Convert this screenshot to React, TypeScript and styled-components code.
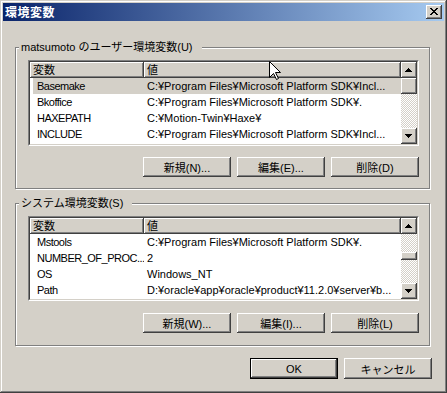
import React from "react";
import styled, { createGlobalStyle, css } from "styled-components";

const FACE = "#D4D0C8";
const SHADOW = "#808080";
const DARK = "#404040";
const HILITE = "#FFFFFF";

const Global = createGlobalStyle`
  html, body { margin: 0; padding: 0; background: ${FACE}; }
  body {
    font-family: "Liberation Sans", "Noto Sans CJK JP", sans-serif;
    font-size: 11px;
    color: #000;
  }
  * { box-sizing: border-box; }
`;

const raised = css`
  background: ${FACE};
  box-shadow: inset -1px -1px ${DARK}, inset 1px 1px ${HILITE},
    inset -2px -2px ${SHADOW}, inset 2px 2px ${FACE};
`;

const Window = styled.div`
  position: relative;
  width: 447px;
  height: 393px;
  padding: 3px;
  background: ${FACE};
  box-shadow: inset -1px -1px ${DARK}, inset 1px 1px ${FACE},
    inset -2px -2px ${SHADOW}, inset 2px 2px ${HILITE};
  display: flex;
  flex-direction: column;
`;

const TitleBar = styled.div`
  height: 18px;
  flex: none;
  display: flex;
  align-items: center;
  padding: 0 2px 0 2px;
  background: linear-gradient(to right, #0a246a, #a6caf0);
`;

const TitleText = styled.span`
  flex: 1;
  color: #fff;
  font-family: "Noto Sans CJK JP", sans-serif;
  font-weight: 700;
  font-size: 12px;
  line-height: 18px;
  letter-spacing: 0.5px;
`;

const CloseButton = styled.div`
  width: 16px;
  height: 14px;
  padding: 3px 0 0 4px;
  ${raised};
  svg { display: block; }
`;

const Body = styled.div`
  flex: 1;
  display: flex;
  flex-direction: column;
  padding: 26px 12px 11px 12px;
`;

const Group = styled.div<{ $pb: number; $mt: number }>`
  position: relative;
  margin: ${(p) => p.$mt}px 2px 0 0;
  border: 1px solid ${SHADOW};
  box-shadow: 1px 1px 0 ${HILITE}, inset 1px 1px 0 ${HILITE};
  padding: 12px 10px ${(p) => p.$pb}px 12px;
  display: flex;
  flex-direction: column;
`;

const GroupLabel = styled.span`
  position: absolute;
  left: 3px;
  top: -8px;
  height: 14px;
  line-height: 14px;
  padding: 0 9px 0 2px;
  background: ${FACE};
  white-space: nowrap;
`;

const ListFrame = styled.div<{ $h: number }>`
  height: ${(p) => p.$h}px;
  border: 1px solid;
  border-color: ${SHADOW} ${HILITE} ${HILITE} ${SHADOW};
`;

const ListInner = styled.div`
  height: 100%;
  border: 1px solid;
  border-color: ${DARK} ${FACE} ${FACE} ${DARK};
  background: #fff;
  display: grid;
  grid-template-columns: 1fr 16px;
  overflow: hidden;
`;

const ListArea = styled.div`
  overflow: hidden;
  display: flex;
  flex-direction: column;
`;

const Header = styled.div`
  display: grid;
  grid-template-columns: 114px 1fr;
  height: 16px;
  flex: none;
`;

const HeaderCell = styled.div`
  ${raised};
  padding-left: 3px;
  line-height: 16px;
  white-space: nowrap;
  overflow: hidden;
`;

const Row = styled.div<{ $selected?: boolean }>`
  display: grid;
  grid-template-columns: 111px 1fr;
  margin-left: 3px;
  height: 16px;
  flex: none;
  line-height: 16px;
  background: ${(p) => (p.$selected ? FACE : "transparent")};
`;

const Cell = styled.div<{ $pl: number; $tight?: boolean }>`
  padding-left: ${(p) => p.$pl}px;
  white-space: nowrap;
  overflow: hidden;
  letter-spacing: ${(p) => (p.$tight ? "-0.5px" : "0")};
`;

const ScrollBar = styled.div`
  display: flex;
  flex-direction: column;
  width: 16px;
`;

const ScrollButton = styled.div`
  width: 16px;
  height: 16px;
  flex: none;
  padding: 6px 0 0 4px;
  ${raised};
  svg { display: block; }
`;

const Track = styled.div`
  flex: 1;
  display: flex;
  flex-direction: column;
  background-color: ${FACE};
  background-image: conic-gradient(
    ${HILITE} 0 25%,
    ${FACE} 0 50%,
    ${HILITE} 0 75%,
    ${FACE} 0
  );
  background-size: 2px 2px;
`;

const Thumb = styled.div<{ $h: number; $top: number }>`
  height: ${(p) => p.$h}px;
  margin-top: ${(p) => p.$top}px;
  flex: none;
  ${raised};
`;

const ButtonRow = styled.div<{ $mt: number }>`
  display: flex;
  justify-content: flex-end;
  gap: 6px;
  margin-top: ${(p) => p.$mt}px;
`;

const PushButton = styled.div<{ $h?: number; $default?: boolean }>`
  width: 88px;
  height: ${(p) => p.$h ?? 20}px;
  display: flex;
  align-items: center;
  justify-content: center;
  white-space: nowrap;
  ${raised};
  ${(p) =>
    p.$default &&
    css`
      box-shadow: inset 0 0 0 1px #000, inset -2px -2px ${DARK},
        inset 2px 2px ${HILITE}, inset -3px -3px ${SHADOW};
    `}
`;

const Cursor = styled.svg`
  position: absolute;
  left: 269px;
  top: 61px;
  display: block;
`;

const UpGlyph = () => (
  <svg width="7" height="4" viewBox="0 0 7 4">
    <path d="M3 0h1v1h-1zM2 1h3v1h-3zM1 2h5v1h-5zM0 3h7v1h-7z" fill="#000" />
  </svg>
);

const DownGlyph = () => (
  <svg width="7" height="4" viewBox="0 0 7 4">
    <path d="M0 0h7v1h-7zM1 1h5v1h-5zM2 2h3v1h-3zM3 3h1v1h-1z" fill="#000" />
  </svg>
);

type Item = { name: string; value: string; selected?: boolean };

const userVars: Item[] = [
  { name: "Basemake", value: "C:¥Program Files¥Microsoft Platform SDK¥Incl...", selected: true },
  { name: "Bkoffice", value: "C:¥Program Files¥Microsoft Platform SDK¥." },
  { name: "HAXEPATH", value: "C:¥Motion-Twin¥Haxe¥" },
  { name: "INCLUDE", value: "C:¥Program Files¥Microsoft Platform SDK¥Incl..." },
];

const sysVars: Item[] = [
  { name: "Mstools", value: "C:¥Program Files¥Microsoft Platform SDK¥." },
  { name: "NUMBER_OF_PROC...", value: "2" },
  { name: "OS", value: "Windows_NT" },
  { name: "Path", value: "D:¥oracle¥app¥oracle¥product¥11.2.0¥server¥b..." },
];

const ListView = ({
  items,
  height,
  thumbH,
  thumbTop,
}: {
  items: Item[];
  height: number;
  thumbH: number;
  thumbTop: number;
}) => (
  <ListFrame $h={height}>
    <ListInner>
      <ListArea>
        <Header>
          <HeaderCell>変数</HeaderCell>
          <HeaderCell>値</HeaderCell>
        </Header>
        {items.map((it) => (
          <Row key={it.name} $selected={it.selected}>
            <Cell $pl={4} $tight>
              {it.name}
            </Cell>
            <Cell $pl={3}>{it.value}</Cell>
          </Row>
        ))}
      </ListArea>
      <ScrollBar>
        <ScrollButton>
          <UpGlyph />
        </ScrollButton>
        <Track>
          <Thumb $h={thumbH} $top={thumbTop} />
        </Track>
        <ScrollButton>
          <DownGlyph />
        </ScrollButton>
      </ScrollBar>
    </ListInner>
  </ListFrame>
);

export default function App() {
  return (
    <>
      <Global />
      <Window>
        <TitleBar>
          <TitleText>環境変数</TitleText>
          <CloseButton>
            <svg width="8" height="7" viewBox="0 0 8 7">
              <path
                d="M0 0h2v1h-2zM6 0h2v1h-2zM1 1h2v1h-2zM5 1h2v1h-2zM2 2h4v1h-4zM3 3h2v1h-2zM2 4h4v1h-4zM1 5h2v1h-2zM5 5h2v1h-2zM0 6h2v1h-2zM6 6h2v1h-2z"
                fill="#000"
              />
            </svg>
          </CloseButton>
        </TitleBar>
        <Body>
          <Group $mt={0} $pb={11}>
            <GroupLabel>matsumoto のユーザー環境変数(U)</GroupLabel>
            <ListView items={userVars} height={86} thumbH={16} thumbTop={0} />
            <ButtonRow $mt={11}>
              <PushButton>新規(N)...</PushButton>
              <PushButton>編集(E)...</PushButton>
              <PushButton>削除(D)</PushButton>
            </ButtonRow>
          </Group>
          <Group $mt={14} $pb={12}>
            <GroupLabel>システム環境変数(S)</GroupLabel>
            <ListView items={sysVars} height={85} thumbH={8} thumbTop={18} />
            <ButtonRow $mt={12}>
              <PushButton>新規(W)...</PushButton>
              <PushButton>編集(I)...</PushButton>
              <PushButton>削除(L)</PushButton>
            </ButtonRow>
          </Group>
          <ButtonRow $mt={12}>
            <PushButton $h={21} $default>
              OK
            </PushButton>
            <PushButton $h={21}>キャンセル</PushButton>
          </ButtonRow>
        </Body>
        <Cursor width="13" height="20" viewBox="0 0 13 20">
          <path
            d="M0.5 0.5 L0.5 16.5 L4.5 12.5 L7.5 18.5 L9.5 17.5 L6.5 11.5 L11.5 11.5 Z"
            fill="#fff"
            stroke="#000"
            strokeWidth="1"
          />
        </Cursor>
      </Window>
    </>
  );
}
